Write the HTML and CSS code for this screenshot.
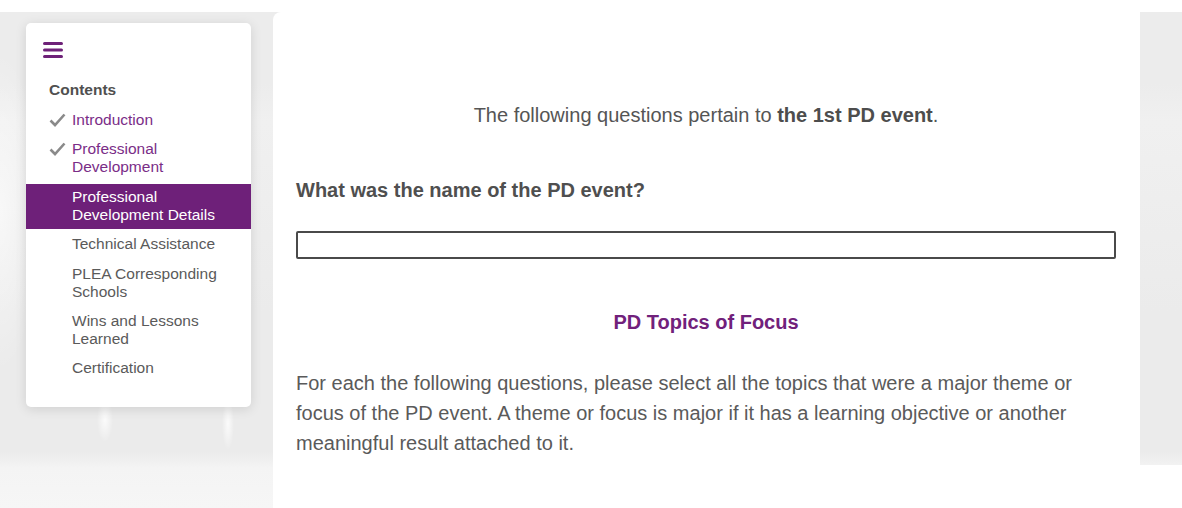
FILE: index.html
```html
<!DOCTYPE html>
<html lang="en">
<head>
    <meta charset="UTF-8">
    <meta name="viewport" content="width=device-width, initial-scale=1.0">
    <title>PD Event Details</title>
    <link rel="stylesheet" href="styles.css">
</head>
<body>
    <div class="page">
        <aside class="side">
            <nav class="toc">
                <button class="menu-btn" type="button" aria-label="Menu">
                    <svg width="20" height="16" viewBox="0 0 20 16">
                        <rect x="0" y="0" width="20" height="3" rx="1.5"/>
                        <rect x="0" y="6.5" width="20" height="3" rx="1.5"/>
                        <rect x="0" y="13" width="20" height="3" rx="1.5"/>
                    </svg>
                </button>
                <div class="toc-title">Contents</div>
                <ul class="toc-list">
                    <li class="done">
                        <svg class="check" width="17" height="14" viewBox="0 0 17 14"><path d="M1.5 7.5 L6 12 L15.5 1.5"/></svg>
                        Introduction
                    </li>
                    <li class="done">
                        <svg class="check" width="17" height="14" viewBox="0 0 17 14"><path d="M1.5 7.5 L6 12 L15.5 1.5"/></svg>
                        Professional Development
                    </li>
                    <li class="active">Professional Development Details</li>
                    <li>Technical Assistance</li>
                    <li>PLEA Corresponding Schools</li>
                    <li>Wins and Lessons Learned</li>
                    <li>Certification</li>
                </ul>
            </nav>
        </aside>

        <main class="content">
            <p class="lead">The following questions pertain to <b>the 1st PD event</b>.</p>

            <label class="question" for="pd-name">What was the name of the PD event?</label>
            <input type="text" id="pd-name" class="text-input">

            <h2 class="section-title">PD Topics of Focus</h2>

            <p class="body-text">For each the following questions, please select all the topics that were a major theme or focus of the PD event. A theme or focus is major if it has a learning objective or another meaningful result attached to it.</p>
        </main>

        <div class="right-gap"></div>
    </div>
</body>
</html>
```

FILE: styles.css
```css
body {
    margin: 0;
    padding: 0;
    background-color: #fff;
    font-family: "Liberation Sans", Arial, sans-serif;
    color: #555;
}

.page {
    display: flex;
    margin-top: 12px;
    height: 496px;
    background:
        radial-gradient(ellipse 8px 22px at 105px 408px, rgba(255,255,255,0.8), rgba(255,255,255,0)),
        radial-gradient(ellipse 6px 26px at 228px 412px, rgba(255,255,255,0.8), rgba(255,255,255,0)),
        radial-gradient(ellipse 40px 160px at 0px 200px, rgba(255,255,255,0.6), rgba(255,255,255,0)),
        linear-gradient(to bottom, #ececec 0, #ececec 72px, #f0f0f0 110px, #ebebeb 300px, #ebebeb 440px, #f4f4f4 456px, #f6f6f6 100%);
}

.side {
    width: 273px;
    flex-shrink: 0;
}

.toc {
    width: 225px;
    margin: 11px 0 0 26px;
    padding: 19px 0 22px;
    background-color: #fff;
    border-radius: 5px;
    box-shadow: 0 2px 12px rgba(0, 0, 0, 0.12);
}

.menu-btn {
    display: block;
    margin-left: 17px;
    padding: 0;
    border: none;
    background: none;
    fill: #6e2178;
    line-height: 0;
}

.toc-title {
    margin: 23px 0 8px 23px;
    font-size: 15.5px;
    font-weight: bold;
    line-height: 18px;
    color: #505050;
}

.toc-list {
    list-style: none;
    margin: 0;
    padding: 0;
}

.toc-list li {
    position: relative;
    padding: 4px 10px 5px 46px;
    margin-bottom: 2.4px;
    font-size: 15.5px;
    line-height: 18px;
    color: #5a5a5a;
}

.toc-list li.done {
    color: #7a2d87;
}

.toc-list li.active {
    background-color: #6e2079;
    color: #fff;
}

.check {
    position: absolute;
    left: 23px;
    top: 6px;
    fill: none;
    stroke: #8a8a8a;
    stroke-width: 2.6;
}

.content {
    width: 867px;
    flex-shrink: 0;
    box-sizing: border-box;
    padding: 88px 24px 0 23px;
    background-color: #fff;
    border-top-left-radius: 8px;
    font-size: 20px;
    line-height: 30px;
}

.lead {
    margin: 0 0 45px;
    text-align: center;
    color: #555;
}

.lead b {
    color: #4d4d4d;
}

.question {
    display: block;
    font-weight: bold;
    color: #4f4f4f;
}

.text-input {
    display: block;
    width: 100%;
    height: 28px;
    margin-top: 26px;
    box-sizing: border-box;
    border: 2px solid #4a4a4a;
    border-radius: 2px;
    font-size: 16px;
}

.section-title {
    margin: 48px 0 31px;
    font-size: 20px;
    line-height: 30px;
    text-align: center;
    color: #71217b;
}

.body-text {
    margin: 0;
    color: #5a5a5a;
}

.right-gap {
    flex: 1;
    align-self: stretch;
    background: linear-gradient(to bottom, rgba(255,255,255,0) 453px, #fff 453px);
}
```
